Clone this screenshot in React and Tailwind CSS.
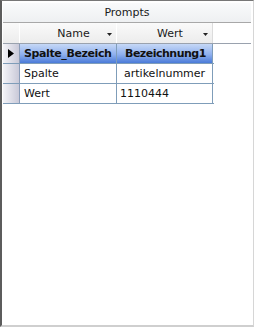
export default function App() {
  const font = { fontFamily: '"DejaVu Sans", Verdana, sans-serif' };
  const rowHead =
    "w-[17px] shrink-0 h-full border-r border-r-[#8a9cb8] bg-[linear-gradient(to_right,#f4f4f8,#c9c9d8)] flex items-center justify-center";
  const Arrow = () => (
    <svg width="5" height="3" viewBox="0 0 5 3" className="shrink-0">
      <path d="M0 0H5L2.5 3Z" fill="#222" />
    </svg>
  );
  return (
    <div className="w-[255px] h-[328px] bg-white" style={font}>
      <div className="w-[254px] h-[327px] border-l-2 border-l-[#5c5c5c] border-t border-t-[#777] border-r border-r-[#d6d6d6] border-b-2 border-b-[#cfcfcf] flex flex-col pt-[2px] pl-px pr-[2px]">
        <div className="h-[20px] shrink-0 bg-[linear-gradient(#f9fafb,#eef0f2)] border-b border-b-[#a8a8a8] flex items-center justify-center pt-[2px] text-[11px] text-[#1a1a1a]">
          Prompts
        </div>
        <div className="h-[21px] shrink-0 flex text-[11px] text-[#1a1a1a] border-b border-b-[#9aa2ae]">
          <div className="w-[17px] shrink-0 bg-[linear-gradient(#fafafa,#ececec)] border-r border-r-[#fff]" />
          <div className="w-[97px] shrink-0 bg-[linear-gradient(#fafafa,#ececec)] border-r border-r-white flex items-center pt-[2px] pl-[20px] pr-[4px]">
            <span className="flex-1 text-center">Name</span>
            <Arrow />
          </div>
          <div className="w-[96px] shrink-0 bg-[linear-gradient(#fafafa,#ececec)] border-r border-r-[#dcdcdc] flex items-center pt-[2px] pl-[20px] pr-[4px]">
            <span className="flex-1 text-center">Wert</span>
            <Arrow />
          </div>
          <div className="flex-1" />
        </div>
        <div className="flex flex-col w-[211px] text-[11px] text-[#111]">
          <div className="h-[20px] flex border-b border-b-[#7f9db9]">
            <div className={rowHead}>
              <svg width="6" height="9" viewBox="0 0 6 9">
                <path d="M0 0L6 4.5L0 9Z" fill="#000" />
              </svg>
            </div>
            <div className="w-[97px] shrink-0 border-r border-r-[#7f9db9] bg-[linear-gradient(#c6d8f6,#8fb0ee_55%,#4a7ad8)] flex items-center pt-[1px] pl-[4px] font-bold tracking-[-0.4px] overflow-hidden whitespace-nowrap">
              Spalte_Bezeich
            </div>
            <div className="w-[96px] shrink-0 border-r border-r-[#7f9db9] bg-[linear-gradient(#c6d8f6,#8fb0ee_55%,#4a7ad8)] flex items-center pt-[1px] pl-[8px] font-bold tracking-[-0.5px] overflow-hidden whitespace-nowrap">
              Bezeichnung1
            </div>
          </div>
          <div className="h-[20px] flex border-b border-b-[#7f9db9]">
            <div className={rowHead} />
            <div className="w-[97px] shrink-0 border-r border-r-[#7f9db9] flex items-center pt-[1px] pl-[4px] overflow-hidden whitespace-nowrap">
              Spalte
            </div>
            <div className="w-[96px] shrink-0 border-r border-r-[#7f9db9] flex items-center pt-[1px] pl-[7px] overflow-hidden whitespace-nowrap">
              artikelnummer
            </div>
          </div>
          <div className="h-[20px] flex border-b border-b-[#7f9db9]">
            <div className={rowHead} />
            <div className="w-[97px] shrink-0 border-r border-r-[#7f9db9] flex items-center pt-[1px] pl-[4px] overflow-hidden whitespace-nowrap">
              Wert
            </div>
            <div className="w-[96px] shrink-0 border-r border-r-[#7f9db9] flex items-center pt-[1px] pl-[3px] overflow-hidden whitespace-nowrap">
              1110444
            </div>
          </div>
        </div>
      </div>
    </div>
  );
}
